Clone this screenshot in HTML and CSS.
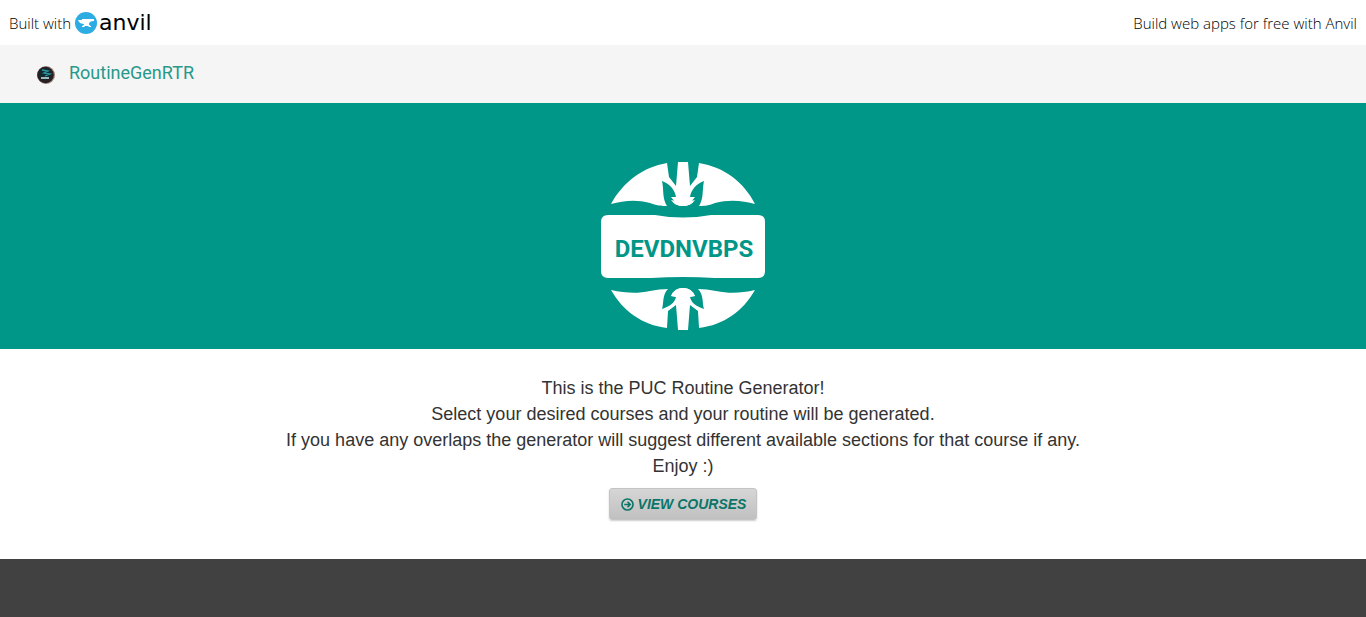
FILE: index.html
```html
<!DOCTYPE html>
<html lang="en">
<head>
<meta charset="utf-8">
<meta name="viewport" content="width=device-width, initial-scale=1">
<title>RoutineGenRTR</title>
<link rel="stylesheet" href="styles.css">
</head>
<body>
<div class="banner">
  <a class="built" href="#">Built with
    <svg class="anvil-icon" viewBox="0 0 22 22" aria-hidden="true">
      <circle cx="11" cy="11" r="11" fill="#2bace2"/>
      <path fill="#fff" d="M3 8h4V7h12v2c-3 .3-5 1-5 3 0 1 1 1.600 2 2v1h-2l-1-1h-3l-1 1H7v-1c1-.4 2-1 2-2C7 12 4 11 3 8z"/>
    </svg>
    <span class="anvil-word">anvil</span>
  </a>
  <a class="promo" href="#">Build web apps for free with Anvil</a>
</div>
<header class="app-bar">
  <svg class="app-icon" viewBox="0 0 20 20" aria-hidden="true">
    <circle cx="10" cy="11" r="9" fill="#9b827b"/>
    <circle cx="9.500" cy="11" r="8.300" fill="#282023"/>
    <circle cx="9" cy="10" r="6" fill="#13292f"/>
    <path d="M6 6l6 1-4 2 6 1-5 2" stroke="#2b9aa5" stroke-width="1.300" fill="none"/>
    <path d="M5 14h8" stroke="#d5e8e9" stroke-width="1.500"/>
  </svg>
  <a class="app-title" href="#">RoutineGenRTR</a>
</header>
<main>
  <section class="hero">
    <svg class="logo" viewBox="600 161 166 170" role="img" aria-label="Logo">
      <g fill="#fff">
        <path d="M611 204C623 182 643 167 667 163L669 177L676 186L678 162H688L690 186L697 177L699 163C724 167 744 182 755 204C744 201 730 199 715 203C708 206 703 206 698 206L694 199C693 204 688 206 683 206C678 206 673 204 672 199L668 206C662 206 658 206 650 203C635 199 623 201 611 204Z"/>
        <path d="M608 215H655Q683 220 711 215H758Q765 215 765 222V271Q765 278 758 278H715Q683 276 651 278H608Q601 278 601 271V222Q601 215 608 215Z"/>
        <path d="M611 290C625 293 637 294 650 291Q659 289 669 289L672 296C674 290 678 288 683 288C688 288 692 290 694 296L697 289Q707 289 716 291C730 294 742 293 755 290C743 311 724 325 699 328L698 311L690 305L688 330H678L676 305L668 311L667 328C642 325 623 311 611 290Z"/>
      </g>
      <g fill="#009688">
        <path d="M662 181C670 184 675 190 676 197L671 197L675 202L671 201L676 206H667C662 198 664 190 662 181Z"/>
        <path d="M704 181C696 184 691 190 690 197L695 197L691 202L695 201L690 206H699C704 198 702 190 704 181Z"/>
        <path d="M662 309C671 306 675 302 676 297L671 296L675 290L671 289H668C662 295 664 303 662 309Z"/>
        <path d="M704 309C695 306 691 302 690 297L695 296L691 290L695 289H698C704 295 702 303 704 309Z"/>
      </g>
      <path fill="#fff" d="M671 200Q683 203 695 200Q691 206 683 206Q675 206 671 200ZM671 296Q674 288 683 288Q692 288 695 296Q683 298 671 296Z"/>
      <text class="logo-text" x="684" y="257" text-anchor="middle">DEVDNVBPS</text>
    </svg>
  </section>
  <section class="intro">
    <p>This is the PUC Routine Generator!<br>Select your desired courses and your routine will be generated.<br>If you have any overlaps the generator will suggest different available sections for that course if any.<br>Enjoy :)</p>
    <button class="view" type="button">
      <svg class="arrow" viewBox="0 0 12 12" aria-hidden="true"><circle cx="6" cy="6" r="5.100"/><path d="M3 6h5M6 3.500L8.500 6 6 8.500"/></svg>
      VIEW COURSES
    </button>
  </section>
</main>
<footer class="footer"></footer>
</body>
</html>
```
FILE: styles.css
```css
* { box-sizing: border-box; }
body {
  margin: 0;
  min-height: 100vh;
  display: flex;
  flex-direction: column;
  background: #fff;
  color: #333;
  font-family: "Liberation Sans", Arial, sans-serif;
}
a { color: inherit; text-decoration: none; }
.banner {
  display: flex;
  justify-content: space-between;
  align-items: center;
  padding: 0 9px;
  height: 45px;
  color: #000;
  font: 300 15px/20px "Open Sans", sans-serif;
}
.built { display: flex; align-items: center; gap: 4px; }
.anvil-icon { width: 22px; height: 22px; }
.anvil-word { font: 22px/20px "DejaVu Sans", sans-serif; margin-left: -2px; }
.app-bar {
  display: flex;
  align-items: center;
  gap: 13px;
  height: 58px;
  padding: 0 36px;
  background: #f5f5f5;
}
.app-icon { width: 20px; height: 20px; }
.app-title { color: #26998b; font: 18px/26px Roboto, sans-serif; padding-bottom: 2px; }
.hero {
  display: flex;
  justify-content: center;
  padding: 58px 16px 18px;
  background: #009688;
}
.logo { width: 166px; height: 170px; }
.logo-text {
  fill: #009688;
  font: bold 24px Roboto, "Liberation Sans", sans-serif;
}
.intro {
  display: flex;
  flex-direction: column;
  align-items: center;
  padding: 26px 16px 39px;
  text-align: center;
}
.intro p { margin: 0 0 9px; font-size: 18px; line-height: 26px; }
.view {
  display: flex;
  align-items: center;
  gap: 4px;
  height: 32px;
  padding: 0 10px 0 11px;
  border: 1px solid #c4c4c4;
  border-radius: 3px;
  background: linear-gradient(#d6d6d6, #c0c0c0);
  box-shadow: 0 1px 2px #ccc;
  color: #0b7568;
  font: italic bold 14px/20px "Liberation Sans", Arial, sans-serif;
}
.arrow { width: 13px; height: 13px; fill: none; stroke: currentColor; stroke-width: 1.500; }
.footer { flex: 1; min-height: 58px; background: #414141; }
```
